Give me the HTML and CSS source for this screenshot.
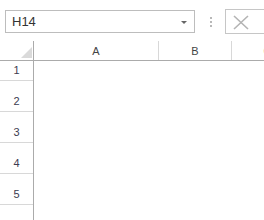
FILE: index.html
```html
<!DOCTYPE html>
<html lang="en">
<head>
    <meta charset="UTF-8">
    <title>Sheet</title>
    <link rel="stylesheet" href="styles.css">
</head>
<body>

    <!-- formula bar -->
    <div class="bar">
        <div class="namebox">
            <span>H14</span>
            <span class="arrow"></span>
        </div>
        <div class="grip">
            <span></span><span></span><span></span>
        </div>
        <div class="btn">
            <svg width="16" height="15" viewBox="0 0 16 15">
                <path d="M1 1 L15 14 M15 1 L1 14" stroke="#b4b4b4" stroke-width="1.6" fill="none"/>
            </svg>
        </div>
    </div>

    <!-- grid -->
    <div class="head">
        <div class="corner"><span class="tri"></span></div>
        <div class="col a">A</div>
        <div class="col b">B</div>
        <div class="col c">C</div>
    </div>
    <div class="rows">
        <div class="num first">1</div>
        <div class="num">2</div>
        <div class="num">3</div>
        <div class="num">4</div>
        <div class="num">5</div>
        <div class="num">6</div>
    </div>

</body>
</html>
```

FILE: styles.css
```css
body {
    margin: 0;
    background: #fff;
    font-family: "Liberation Sans", Arial, sans-serif;
    color: #444;
    overflow: hidden;
    width: 264px;
    height: 220px;
}
.bar {
    display: flex;
    align-items: flex-start;
    height: 41px;
    padding-left: 5px;
    box-sizing: border-box;
}
.namebox {
    margin-top: 10px;
    width: 196px;
    height: 23px;
    box-sizing: border-box;
    border: 1px solid #bdbdbd;
    display: flex;
    align-items: center;
    justify-content: space-between;
    padding: 0 7px 0 6px;
    font-size: 13px;
    color: #333;
}
.arrow {
    width: 0;
    height: 0;
    border-left: 3px solid transparent;
    border-right: 3px solid transparent;
    border-top: 3px solid #666;
    margin-top: 1px;
}
.grip {
    margin: 17px 0 0 15px;
    display: flex;
    flex-direction: column;
    gap: 2px;
}
.grip span {
    width: 2px;
    height: 2px;
    background: #b8b8b8;
}
.btn {
    margin: 9px 0 0 13px;
    width: 40px;
    height: 25px;
    box-sizing: border-box;
    border: 1px solid #c6c6c6;
    border-right: none;
    padding: 5px 0 0 7px;
}
.btn svg {
    display: block;
}
.head {
    display: flex;
    height: 19px;
    border-bottom: 1px solid #ababab;
    font-size: 11px;
    line-height: 11px;
}
.corner {
    width: 33px;
    flex: none;
    border-right: 1px solid #ababab;
    position: relative;
}
.tri {
    position: absolute;
    right: 1px;
    bottom: 2px;
    width: 0;
    height: 0;
    border-left: 11px solid transparent;
    border-bottom: 11px solid #dadada;
}
.col {
    flex: none;
    text-align: center;
    display: flex;
    align-items: flex-end;
    justify-content: center;
    padding-bottom: 3px;
    box-sizing: border-box;
    border-right: 1px solid #d8d8d8;
}
.a {
    width: 125px;
}
.b {
    width: 73px;
}
.c {
    width: 72px;
}
.rows {
    width: 33px;
    border-right: 1px solid #ababab;
    height: 200px;
}
.num {
    height: 31px;
    box-sizing: border-box;
    border-bottom: 1px solid #d8d8d8;
    font-size: 11px;
    line-height: 11px;
    display: flex;
    align-items: flex-end;
    justify-content: center;
    padding-bottom: 4px;
    color: #3c3c50;
}
.first {
    height: 20px;
}
```
